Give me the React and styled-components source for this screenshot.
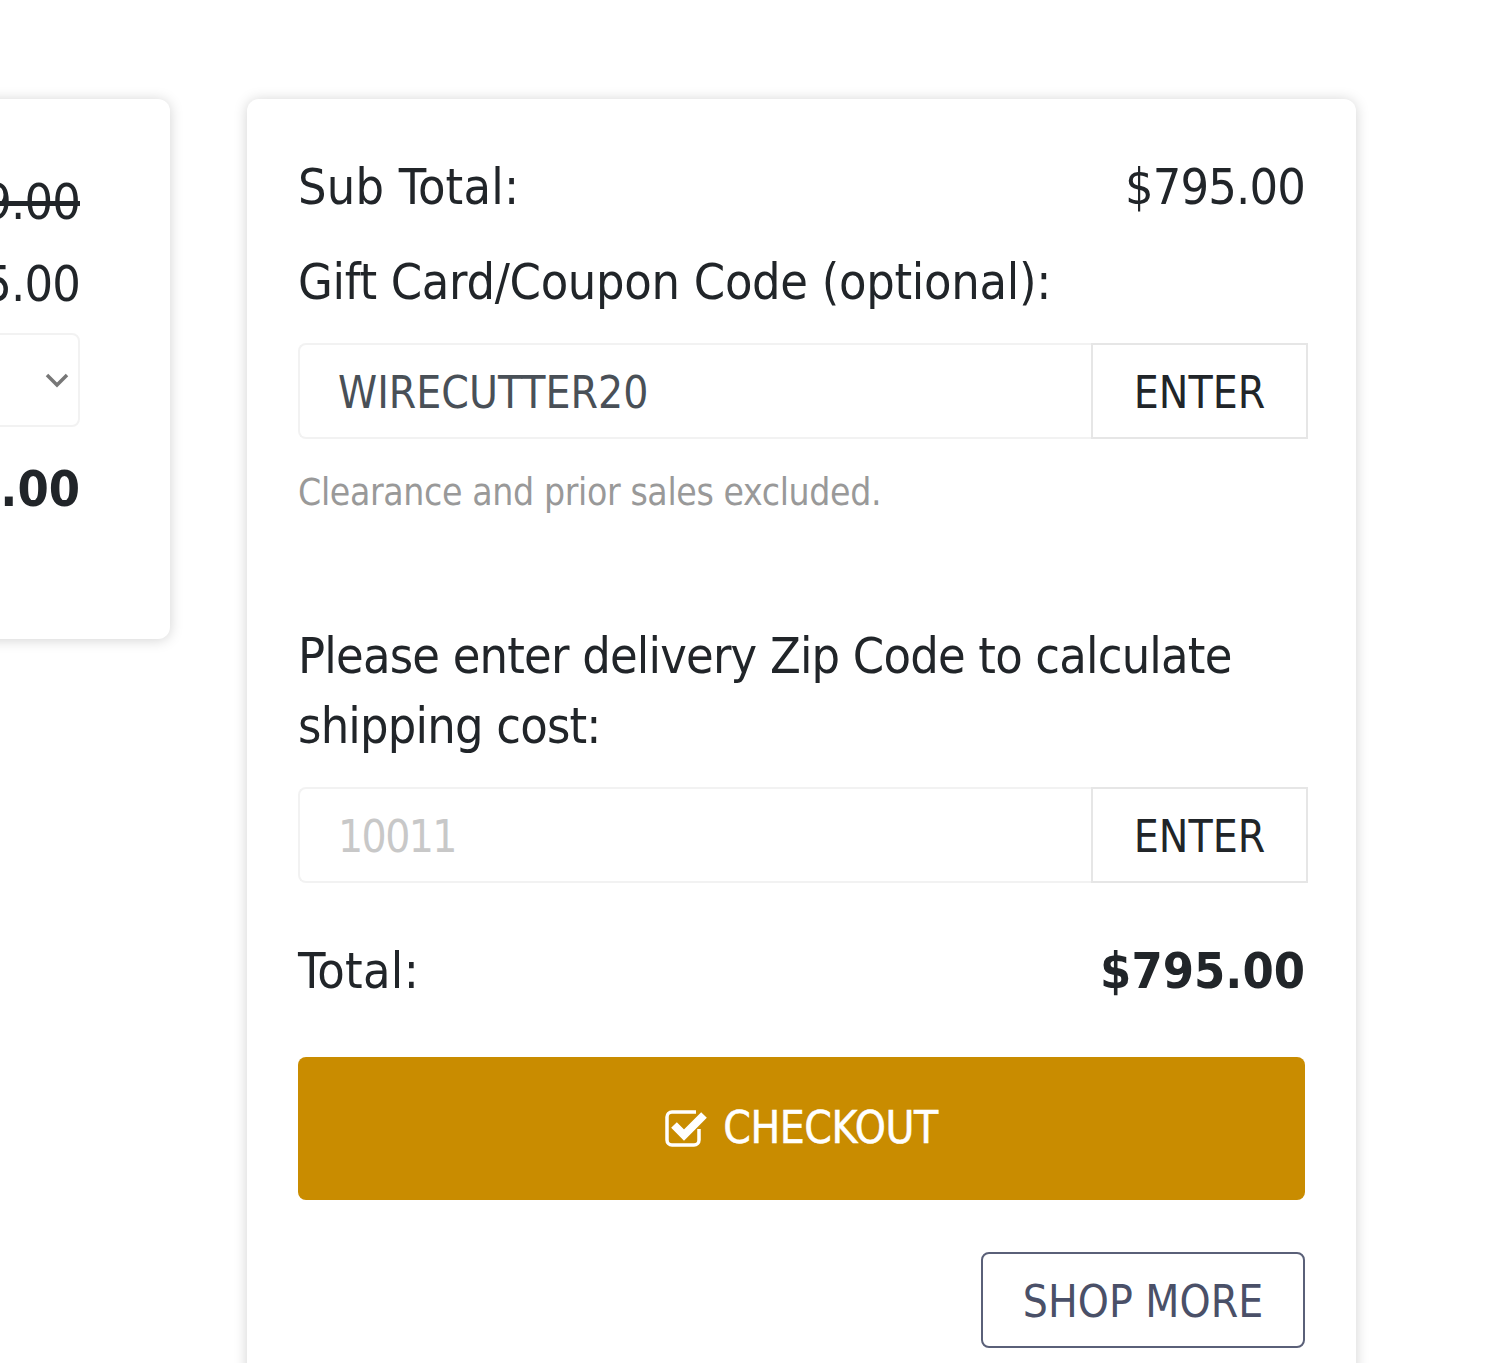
import React from "react";
import styled, { createGlobalStyle } from "styled-components";

const GlobalStyle = createGlobalStyle`
  html, body {
    margin: 0;
    padding: 0;
    background: #fff;
  }
  * {
    box-sizing: border-box;
  }
`;

const Page = styled.div`
  width: 1500px;
  height: 1363px;
  overflow: hidden;
  padding: 99px 144px 0 0;
  display: flex;
  justify-content: flex-end;
  align-items: flex-start;
  gap: 77px;
  font-family: "DejaVu Sans", Verdana, sans-serif;
  font-stretch: condensed;
  color: #212529;
`;

const Card = styled.div`
  flex-shrink: 0;
  background: #fff;
  border-radius: 12px;
  box-shadow: 0 1px 14px rgba(0, 0, 0, 0.18);
`;

const SummaryCard = styled(Card)`
  width: 600px;
  height: 540px;
  padding: 68px 90px 0 0;
`;

const CheckoutCard = styled(Card)`
  width: 1109px;
  height: 1400px;
  padding: 53px 51px 0;
`;

const Row = styled.div`
  display: flex;
  justify-content: space-between;
  font-size: 50px;
  line-height: 70px;
  margin-top: ${(p) => p.$top || 0}px;
  margin-bottom: ${(p) => p.$gap || 0}px;
`;

const RowLabel = styled.span`
  letter-spacing: ${(p) => p.$spacing || 0}px;
`;

const Price = styled.div`
  text-align: right;
  font-size: 50px;
  line-height: 70px;
  margin-bottom: ${(p) => p.$gap || 0}px;
  font-weight: ${(p) => (p.$bold ? 700 : 400)};
  letter-spacing: ${(p) => (p.$bold ? 0 : -0.85)}px;
  text-decoration: ${(p) => (p.$struck ? "line-through" : "none")};
`;

const Select = styled.div`
  height: 94px;
  margin-bottom: 27px;
  border: 2px solid #f2f2f2;
  border-radius: 8px;
  display: flex;
  justify-content: flex-end;
  align-items: center;
  padding-right: 9px;
  color: #777;
`;

const Label = styled.div`
  font-size: 50px;
  line-height: 70px;
  letter-spacing: ${(p) => p.$spacing || 0}px;
  margin-bottom: ${(p) => p.$gap || 0}px;
`;

const InputGroup = styled.div`
  display: flex;
  width: 1010px;
  height: 96px;
`;

const Field = styled.div`
  flex: 1;
  border: 2px solid #f2f2f2;
  border-right: none;
  border-radius: 8px 0 0 8px;
  padding-left: 38px;
  font-size: 44px;
  line-height: 96px;
  letter-spacing: ${(p) => (p.$placeholder ? -1.6 : 0)}px;
  color: ${(p) => (p.$placeholder ? "#c8c8c8" : "#495057")};
`;

const EnterButton = styled.button`
  width: 217px;
  border: 2px solid #e6e6e6;
  background: #fff;
  padding: 2px 0 0;
  font: inherit;
  font-size: 44px;
  color: #212529;
`;

const Hint = styled.div`
  margin-top: 30px;
  margin-bottom: 104px;
  font-size: 37px;
  line-height: 48px;
  letter-spacing: -0.37px;
  color: #999;
`;

const Amount = styled.span`
  font-weight: 700;
`;

const CheckoutButton = styled.button`
  width: 100%;
  height: 143px;
  border: none;
  border-radius: 8px;
  background: #c98c00;
  color: #fff;
  font: inherit;
  font-size: 44px;
  letter-spacing: -0.4px;
  -webkit-text-stroke: 0.5px #fff;
  display: flex;
  justify-content: center;
  align-items: center;
  gap: 14px;
  padding: 0 0 2px;
`;

const ShopRow = styled.div`
  display: flex;
  justify-content: flex-end;
  margin-top: 52px;
`;

const ShopButton = styled.button`
  width: 324px;
  height: 96px;
  border: 2px solid #5a6078;
  border-radius: 8px;
  background: #fff;
  color: #4a5068;
  font: inherit;
  font-size: 44px;
  padding: 2px 0 0;
`;

function CheckIcon() {
  return (
    <svg width="44" height="40" viewBox="0 0 44 40" fill="none">
      <path
        d="M34 21v11a5 5 0 0 1-5 5H7a5 5 0 0 1-5-5V9a5 5 0 0 1 5-5h24"
        stroke="#fff"
        strokeWidth="3.5"
      />
      <path d="M9 17l10 10L39 7" stroke="#fff" strokeWidth="8" />
    </svg>
  );
}

function Chevron() {
  return (
    <svg width="24" height="16" viewBox="0 0 24 16" fill="none">
      <path d="M2 3l10 10L22 3" stroke="currentColor" strokeWidth="3.5" />
    </svg>
  );
}

export default function App() {
  return (
    <>
      <GlobalStyle />
      <Page>
        <SummaryCard>
          <Price $struck $gap={12}>$999.00</Price>
          <Price $gap={14}>$795.00</Price>
          <Select>
            <Chevron />
          </Select>
          <Price $bold>$795.00</Price>
        </SummaryCard>
        <CheckoutCard>
          <Row $gap={25}>
            <RowLabel $spacing={0.2}>Sub Total:</RowLabel>
            <RowLabel $spacing={-0.85}>$795.00</RowLabel>
          </Row>
          <Label $gap={26} $spacing={-0.3}>Gift Card/Coupon Code (optional):</Label>
          <InputGroup>
            <Field>WIRECUTTER20</Field>
            <EnterButton>ENTER</EnterButton>
          </InputGroup>
          <Hint>Clearance and prior sales excluded.</Hint>
          <Label $gap={26} $spacing={-0.8}>
            Please enter delivery Zip Code to calculate
            <br />
            shipping cost:
          </Label>
          <InputGroup>
            <Field $placeholder>10011</Field>
            <EnterButton>ENTER</EnterButton>
          </InputGroup>
          <Row $top={53} $gap={51}>
            <RowLabel $spacing={0.3}>Total:</RowLabel>
            <Amount>$795.00</Amount>
          </Row>
          <CheckoutButton>
            <CheckIcon />
            CHECKOUT
          </CheckoutButton>
          <ShopRow>
            <ShopButton>SHOP MORE</ShopButton>
          </ShopRow>
        </CheckoutCard>
      </Page>
    </>
  );
}
